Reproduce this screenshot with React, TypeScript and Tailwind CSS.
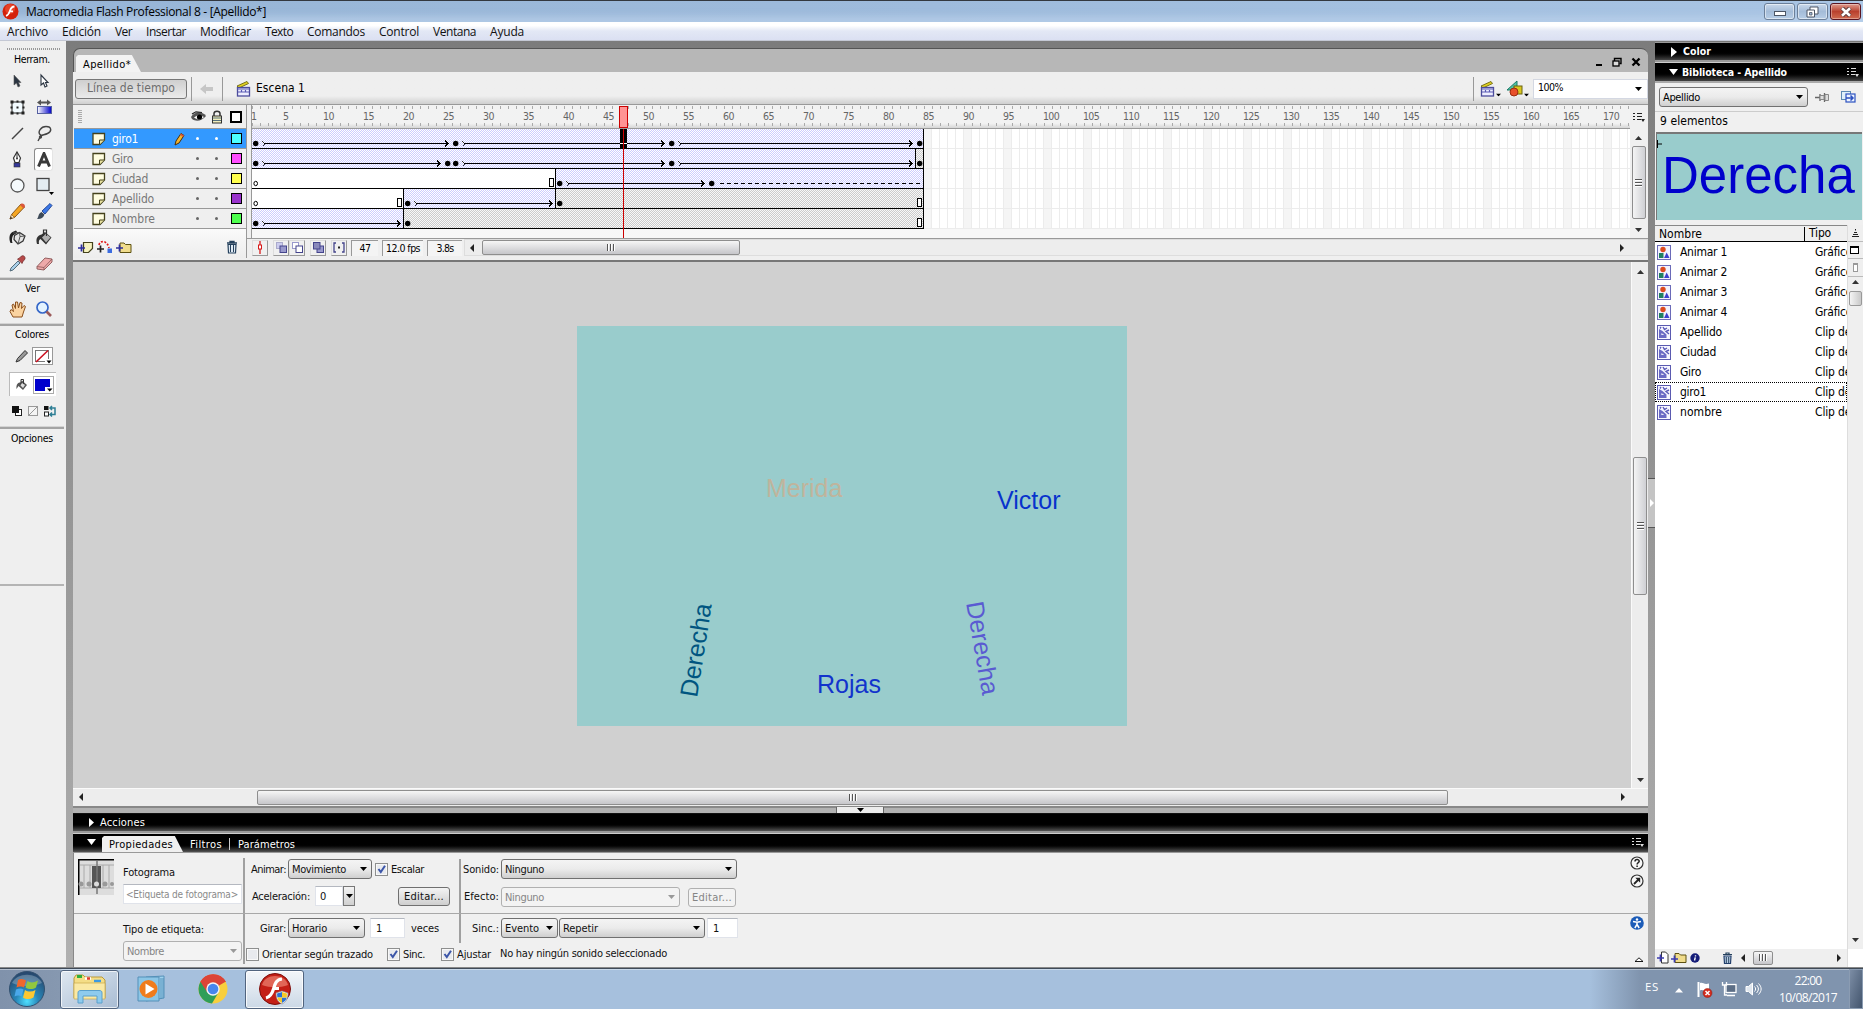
import { useLayoutEffect, useRef, type ReactNode } from "react";

/* Text run whose tracking is adjusted so that it fills a given width. */
function T({ w, className = "", children }: { w: number; className?: string; children: string }) {
  const ref = useRef<HTMLSpanElement>(null);
  useLayoutEffect(() => {
    const el = ref.current;
    if (!el) return;
    el.style.letterSpacing = "0px";
    const natural = el.getBoundingClientRect().width;
    el.style.letterSpacing = `${(w - natural) / children.length}px`;
  }, [w, children]);
  return (
    <span ref={ref} className={`inline-block shrink-0 whitespace-pre ${className}`}>
      {children}
    </span>
  );
}

function Icon({ w, h, className = "", children }: { w: number; h: number; className?: string; children: ReactNode }) {
  return (
    <svg width={w} height={h} viewBox={`0 0 ${w} ${h}`} className={`block shrink-0 ${className}`}>
      {children}
    </svg>
  );
}

const Up = ({ className = "" }) => (
  <Icon w={7} h={4} className={className}><path d="M0 4L3.5 0L7 4Z" fill="#333" /></Icon>
);
const Down = ({ className = "", color = "#000" }) => (
  <Icon w={7} h={4} className={className}><path d="M0 0H7L3.5 4Z" fill={color} /></Icon>
);
const Left = ({ className = "" }) => (
  <Icon w={4} h={8} className={className}><path d="M4 0V8L0 4Z" fill="#222" /></Icon>
);
const Right = ({ className = "" }) => (
  <Icon w={4} h={8} className={className}><path d="M0 0V8L4 4Z" fill="#222" /></Icon>
);

/* ---------- title and menu ---------- */

function TitleBar() {
  return (
    <div className="flex h-[22px] shrink-0 items-center border-t border-[#33383f] bg-linear-to-r from-[#97b5d6] via-[#9ebbdc] to-[#a9c5e4] shadow-[inset_0_-6px_6px_rgba(190,212,236,0.6)]">
      <Icon w={17} h={17} className="ml-[2px]">
        <circle cx="8.5" cy="8.5" r="8" fill="#d4220c" />
        <circle cx="8" cy="6" r="5" fill="#f0583c" opacity=".6" />
        <path d="M12.5 3.5C9 3.5 8.5 6 7.8 8.2C7 10.700 6.300 12 4 12.800M7 8.300H11" stroke="#fff" strokeWidth="1.800" fill="none" />
      </Icon>
      <T w={240} className="ml-[7px] font-['Open_Sans'] text-[12px] text-black">Macromedia Flash Professional 8 - [Apellido*]</T>
      <div className="ml-auto flex gap-[2px] pr-[2px]">
        <div className="flex h-[17px] w-[31px] items-center justify-center rounded-[3px] border border-[#6b7f99] bg-linear-to-b from-[#c9d8ea] via-[#a4bcd8] to-[#b7cde6] shadow-[inset_0_0_0_1px_rgba(255,255,255,.5)]">
          <Icon w={12} h={5} className="mt-1"><rect x=".5" y=".5" width="11" height="4" fill="#fff" stroke="#4c5564" /></Icon>
        </div>
        <div className="flex h-[17px] w-[31px] items-center justify-center rounded-[3px] border border-[#6b7f99] bg-linear-to-b from-[#c9d8ea] via-[#a4bcd8] to-[#b7cde6] shadow-[inset_0_0_0_1px_rgba(255,255,255,.5)]">
          <Icon w={13} h={12}><path d="M4 1H12V8H4Z" fill="#fff" stroke="#4c5564" /><path d="M1 4H8.500V11H1Z" fill="#fff" stroke="#4c5564" /><path d="M3.500 6.500H6V9H3.500Z" fill="#9fb7d4" stroke="#4c5564" strokeWidth=".8" /></Icon>
        </div>
        <div className="flex h-[17px] w-[31px] items-center justify-center rounded-[3px] border border-[#5a1420] bg-linear-to-b from-[#dd9a8e] via-[#b9402e] to-[#cf6a50] shadow-[inset_0_0_0_1px_rgba(255,255,255,.35)]">
          <Icon w={12} h={10}><path d="M2 1L10 9M10 1L2 9" stroke="#5b3b3b" strokeWidth="4.400" /><path d="M2 1.300L10 8.700M10 1.300L2 8.700" stroke="#fff" strokeWidth="2.600" /></Icon>
        </div>
      </div>
    </div>
  );
}

const menus: [string, number][] = [
  ["Archivo", 41], ["Edición", 39], ["Ver", 17], ["Insertar", 40], ["Modificar", 51],
  ["Texto", 28], ["Comandos", 58], ["Control", 40], ["Ventana", 43], ["Ayuda", 34],
];

function MenuBar() {
  return (
    <div className="flex h-[19px] shrink-0 items-center gap-[14px] border-b border-[#c4c8d4] bg-linear-to-b from-white from-20% via-[#e3e8f5] via-50% to-[#dbe0f2] pl-[7px] font-['Open_Sans'] text-[12px] text-[#111]">
      {menus.map(([m, w]) => <T key={m} w={w}>{m}</T>)}
    </div>
  );
}

/* ---------- tool palette ---------- */

const tools: ReactNode[] = [
  <Icon w={20} h={20}><path d="M7 4V14L9.500 12L11 16L13 15L11.500 11.500H14Z" fill="#2b3542" stroke="#555" strokeWidth=".6" /></Icon>,
  <Icon w={20} h={20}><path d="M7 4V14L9.500 12L11 16L13 15L11.500 11.500H14Z" fill="#fff" stroke="#2b3542" strokeWidth="1.100" /></Icon>,
  <Icon w={20} h={20}><rect x="5" y="5" width="11" height="11" fill="#f3fbff" stroke="#222" /><path d="M3.500 3.500h3v3h-3zM14.500 3.500h3v3h-3zM3.500 14.500h3v3h-3zM14.500 14.500h3v3h-3zM9.500 3.500h2v2h-2zM9.500 15.500h2v2h-2zM3.500 9.500h2v2h-2zM15.500 9.500h2v2h-2zM9.500 9.500h2v2h-2z" fill="#222" /></Icon>,
  <Icon w={20} h={20}><defs><linearGradient id="gt"><stop offset="0" stopColor="#fff" /><stop offset="1" stopColor="#0000c8" /></linearGradient></defs><path d="M3 5.500L7 2.500V4.500H13V2.500L17 5.500L13 8.500V6.500H7V8.500Z" fill="#555" /><rect x="3.500" y="9.500" width="14" height="7" fill="url(#gt)" stroke="#5560a0" /></Icon>,
  <Icon w={20} h={20}><path d="M5 16L16 5" stroke="#444" strokeWidth="1.400" /></Icon>,
  <Icon w={20} h={20}><path d="M6.500 12C3 9 7 3.500 12 3.500C18 3.500 18 8.500 13.500 10.500C10.500 12 6 12 5.500 14C5.500 16 8.500 15 7 12.500L4 18" stroke="#444" strokeWidth="1.400" fill="none" /></Icon>,
  <Icon w={20} h={20}><path d="M10 3L13.500 9L12 13.500H8L6.500 9Z" fill="#fff" stroke="#333" strokeWidth="1.200" /><path d="M10 3V9" stroke="#333" /><circle cx="10" cy="9.500" r="1" fill="#333" /><rect x="7" y="14" width="6" height="4" fill="#34389a" stroke="#333" strokeWidth=".6" /></Icon>,
  <div className="flex h-[23px] w-[23px] items-center justify-center rounded-[3px] border border-[#8c8c8c] border-r-[#e5e5e5] border-b-[#e5e5e5] bg-white">
    <Icon w={14} h={15}><path d="M1.500 14.500L7 1.500L12.500 14.500M3.500 10H10.500" stroke="#3a3a3a" strokeWidth="2.900" fill="none" /></Icon>
  </div>,
  <Icon w={20} h={20}><circle cx="10.500" cy="10.500" r="6.500" fill="#f5fafc" stroke="#555" strokeWidth="1.300" /></Icon>,
  <Icon w={22} h={20}><rect x="4" y="3.500" width="12" height="12" fill="#e4edf2" stroke="#444" strokeWidth="1.300" /><path d="M16 17H21L18.500 20Z" fill="#000" /></Icon>,
  <Icon w={20} h={20}><path d="M3 18L5 13L14 3L17.500 6L8 16Z" fill="#f5a623" stroke="#7a4a10" strokeWidth=".9" /><path d="M13 4L16.500 7.500L18 5.500C18 3 16 2 14.500 2.500Z" fill="#d9583c" /><path d="M3 18L4.500 13.500L7.500 16.500Z" fill="#f9e3b8" stroke="#7a4a10" strokeWidth=".6" /><path d="M3 18L3.800 15.800L5.300 17.200Z" fill="#222" /></Icon>,
  <Icon w={20} h={20}><path d="M8 10L16 2.500L18 4.500L11 13Z" fill="#3c78e6" stroke="#1c3f90" strokeWidth=".9" /><path d="M3 18C5 16 4 12.500 7.500 11L10.500 13.500C9.500 17 6 18.500 3 18Z" fill="#3d4a58" /></Icon>,
  <Icon w={20} h={20}><path d="M3.500 16C1.500 11 2.500 6.500 5.500 5L9 3.500L10.500 5.500L6 8.500C5 11 4.500 13 5.500 16Z" fill="#222" /><path d="M7.500 8.500L12.500 5.500L18 9L16 14L11 17L7 12.500Z" fill="#e4e4e4" stroke="#333" strokeWidth="1.200" /><path d="M6 6L12 5.500M12.500 5.500L13 9.500L18 9M13 9.500L11 17" stroke="#555" fill="none" /></Icon>,
  <Icon w={20} h={20}><path d="M3 17C1.500 12 3 8.500 7.500 7.500L11 5L17.500 10.500L12 17.500L6.500 12C5 12.500 4.500 14.500 5 17Z" fill="#333" /><path d="M8 10.500L12 6.500L16.500 10.500L12 15.500Z" fill="#b0b0b0" /><path d="M9.500 9V3H12.500V9" stroke="#333" fill="none" strokeWidth="1.200" /></Icon>,
  <Icon w={20} h={20}><path d="M3 18L4 15L11 8L13 10L6 17Z" fill="#a9cfe8" stroke="#47606f" strokeWidth=".9" /><path d="M10.500 6L15 10.500L16 8.500L18 6C18.500 3.500 16.500 2 14.500 3L12.500 5Z" fill="#b54848" stroke="#6b2a2a" strokeWidth=".7" /></Icon>,
  <Icon w={20} h={20}><path d="M3 13.500L11 5L18 6V9L10 17L3 16Z" fill="#eea9a9" stroke="#8a5555" strokeWidth=".9" /><path d="M3 13.500L10 14.500L18 6M10 14.500V17" fill="none" stroke="#8a5555" strokeWidth=".8" /></Icon>,
];

function ToolDivider() {
  return <div className="h-[3px] w-[64px] shrink-0 bg-[#a4a4a4] shadow-[inset_0_1px_0_#d4d4d4]" />;
}

function Toolbar() {
  return (
    <div className="flex w-[66px] shrink-0 flex-col bg-[#efefef] font-['DejaVu_Sans_Condensed','Noto_Sans',sans-serif] text-[10.500px] text-black">
      <div className="mt-[6px] ml-[7px] h-[4px] w-[53px] bg-[repeating-linear-gradient(90deg,#999_0_1px,transparent_1px_2px)] shadow-[inset_0_-1px_0_#efefef,inset_0_1px_0_#efefef]" />
      <div className="flex h-[17px] items-center pl-[14px]"><T w={36}>Herram.</T></div>
      <div className="grid w-[64px] grid-cols-[34px_28px] grid-rows-[repeat(8,26px)] items-center">
        {tools.map((t, i) => <div key={i} className={i % 2 ? "flex w-[19px] justify-center" : "flex justify-center"}>{t}</div>)}
      </div>
      <div className="h-[1px]" />
      <ToolDivider />
      <div className="flex h-[17px] items-center pl-[25px]"><T w={15}>Ver</T></div>
      <div className="flex h-[26px] items-center pb-[2px]">
        <Icon w={20} h={20} className="ml-[8px]"><path d="M5 18L2 12.500L3 10.500L5.500 12.500L4 6L5.500 5L7.500 9.500L7.500 3H9.500L10.500 9L12 3.500L14 4L13.500 9.500L16 6.500L17.500 7.500L15.500 13L14 18Z" fill="#fbd3a0" stroke="#8b4f1c" strokeWidth="1" /></Icon>
        <Icon w={20} h={20} className="ml-[6px]"><circle cx="8.500" cy="8.500" r="5.500" fill="#e3f3ff" stroke="#3466c8" strokeWidth="1.700" /><path d="M12.500 12.500L17 17" stroke="#9b5a5a" strokeWidth="2.600" /></Icon>
      </div>
      <ToolDivider />
      <div className="flex h-[17px] items-center pl-[15px]"><T w={34}>Colores</T></div>
      <div className="flex h-[25px] items-center">
        <Icon w={14} h={14} className="ml-[15px]"><path d="M1 13L2.500 9.500L10 1.500L12.500 4L5 11.500Z" fill="#999" stroke="#333" /></Icon>
        <div className="ml-[3px] flex h-[18px] w-[21px] items-center border border-[#999] bg-white">
          <Icon w={19} h={16}><rect x="2.500" y="2.500" width="13" height="11" fill="#fff" stroke="#777" /><path d="M3 14L15 2.500" stroke="#cc1020" strokeWidth="1.600" /><path d="M12 11H19V16H12Z" fill="#fff" /><path d="M13.500 12.500H18.500L16 15.500Z" fill="#000" /></Icon>
        </div>
      </div>
      <div className="mt-[4px] ml-[9px] flex h-[24px] w-[47px] items-center border-t border-l border-[#bbb] bg-white">
        <Icon w={14} h={14} className="ml-[5px]"><path d="M1.500 11C1 6 3 4.500 5.500 4.500L7 2.500L12 7L8 12L3.500 8Z" fill="#555" /><path d="M6 6V1.500H8.500V7" stroke="#333" fill="none" /><path d="M7 5L10 7L8 10L5.500 7.500Z" fill="#ddd" /></Icon>
        <div className="ml-[4px] flex h-[18px] w-[21px] items-center border border-[#aaa] bg-white">
          <Icon w={19} h={16}><rect x="1" y="2" width="15" height="12" fill="#0000cc" /><path d="M11 10H19V16H11Z" fill="#fff" /><path d="M13 11.500H18.500L15.750 14.500Z" fill="#000" /></Icon>
        </div>
      </div>
      <div className="flex h-[30px] items-center pl-[11px]">
        <Icon w={12} h={12}><rect x="4.500" y="4.500" width="6" height="6" fill="#fff" stroke="#222" /><rect x="1" y="1" width="7" height="7" fill="#111" /></Icon>
        <Icon w={12} h={12} className="ml-[4px]"><rect x="1.500" y="1.500" width="9" height="9" fill="#f4f4f4" stroke="#999" /><path d="M2 10L10 2" stroke="#999" /></Icon>
        <Icon w={14} h={12} className="ml-[4px]"><rect x="1" y="1" width="4.500" height="4" fill="#111" /><rect x="1.500" y="7" width="4" height="4" fill="#fff" stroke="#222" /><path d="M7 3H12V9.500H7M9 1L7 3L9 5M9 7.500L7 9.500L9 11.500" stroke="#2e7f95" strokeWidth="1.500" fill="none" /></Icon>
      </div>
      <ToolDivider />
      <div className="flex h-[18px] items-center pl-[11px]"><T w={42}>Opciones</T></div>
      <div className="mt-[137px] h-[2px] w-[64px] bg-[#b4b4b4]" />
    </div>
  );
}

/* ---------- document window ---------- */

const Clapper = () => (
  <Icon w={15} h={17}>
    <path d="M1 6L11 1.500L12.500 3.500L3 8Z" fill="#e0d020" stroke="#6b6410" strokeWidth=".9" />
    <rect x="1.500" y="7.500" width="12" height="8.500" fill="#eef" stroke="#4c4c9c" strokeWidth="1.300" />
    <path d="M1.500 9H13.500M2 12H13M5.500 10V12M9.500 10V12" stroke="#5a5ab4" strokeWidth="1.200" />
  </Icon>
);

function DocTabs() {
  return (
    <div className="flex h-[24px] shrink-0 items-end rounded-t-[7px] border-t border-l border-[#555] bg-[#b7b7b7]">
      <div className="ml-[2px] flex h-[17px] w-[65px] items-center bg-[#f3f3f3] pt-[1px] pl-[7px] [clip-path:polygon(0_2px,2px_0,86%_0,100%_100%,0_100%)]">
        <T w={48} className="text-[11px]">Apellido*</T>
      </div>
      <div className="mr-[7px] mb-[5px] ml-auto flex items-end gap-[9px]">
        <Icon w={8} h={10}><rect x="1" y="7" width="6" height="2" fill="#000" /></Icon>
        <Icon w={10} h={10}><path d="M2.500 4V1.500H9V6.500H7.500" stroke="#000" strokeWidth="1.400" fill="none" /><rect x="1" y="4" width="6" height="5" fill="#ddd" stroke="#000" strokeWidth="1.300" /></Icon>
        <Icon w={10} h={10}><path d="M1.500 1.500L8.500 8.500M8.500 1.500L1.500 8.500" stroke="#000" strokeWidth="2.300" /></Icon>
      </div>
    </div>
  );
}

function EditBar() {
  return (
    <div className="flex h-[33px] shrink-0 items-center border-b border-[#999] bg-linear-to-b from-[#efefef] from-75% to-[#cfcfcf] pt-[1px] pl-[2px] text-[12px]">
      <div className="flex h-[20px] w-[112px] items-center justify-center rounded-[3px] border-[1.500px] border-[#777] bg-linear-to-b from-[#cfcfcf] to-[#ebebeb] text-[#6d6d6d]"><T w={88}>Línea de tiempo</T></div>
      <div className="ml-[4px] h-[24px] w-[1px] bg-[#999]" />
      <Icon w={14} h={10} className="ml-[8px]"><path d="M0 5L6 0V3H13V7H6V10Z" fill="#c6c6c6" /></Icon>
      <div className="ml-[8px] h-[24px] w-[1px] bg-[#999]" />
      <div className="ml-[13px]"><Clapper /></div>
      <T w={49} className="ml-[5px]">Escena 1</T>
      <div className="ml-auto flex items-center">
        <div className="h-[24px] w-[1px] bg-[#999]" />
        <div className="ml-[6px] flex items-end"><Clapper /><Down className="scale-75" /></div>
        <Icon w={17} h={17} className="ml-[4px]"><path d="M1 10L11 1V10Z" fill="#4fc3a8" stroke="#1f7a66" /><rect x="8" y="6" width="8" height="8" fill="#d9c61e" stroke="#6b6410" /><circle cx="8" cy="12" r="4" fill="#e8502a" stroke="#9a2d10" /></Icon>
        <Down className="mt-[13px] scale-75" />
        <div className="ml-[3px] flex h-[20px] w-[115px] items-center border border-[#d4d8e2] bg-white pr-[5px] pb-[2px] pl-[4px]"><T w={25} className="text-[10.500px]">100%</T><Down className="mt-[2px] ml-auto" /></div>
      </div>
    </div>
  );
}

const layers: [string, number, string][] = [
  ["giro1", 26, "bg-[#4dffff]"],
  ["Giro", 21, "bg-[#ff4dff]"],
  ["Ciudad", 36, "bg-[#ffff4d]"],
  ["Apellido", 42, "bg-[#9933cc]"],
  ["Nombre", 43, "bg-[#4dff4d]"],
];

function LayerList() {
  return (
    <div className="flex w-[173px] shrink-0 flex-col border-r border-[#999]">
      <div className="flex h-[24px] shrink-0 items-center border-b border-[#999] pl-[4px]">
        <div className="h-[13px] w-[4px] bg-[repeating-linear-gradient(0deg,#aaa_0_1px,transparent_1px_2px)]" />
        <Icon w={16} h={12} className="ml-[109px]"><path d="M0 6C4 0 11 0 15 5C11 10 5 11 1 8" fill="#555" /><path d="M3 6.500C6 3.500 10 4 13 6C10 9 6 9 3 6.500" fill="#fff" /><circle cx="8.500" cy="6" r="2.600" fill="#000" /><path d="M1 3L5 .8L11 1.500" stroke="#222" strokeWidth="1.200" fill="none" /></Icon>
        <Icon w={12} h={14} className="ml-[4px]"><path d="M3 6V3.500C3 .5 9 .5 9 3.500V6" stroke="#333" strokeWidth="1.500" fill="none" /><rect x="1.500" y="6" width="9" height="7" fill="#f2eebc" stroke="#333" /><path d="M2 8H10M2 10.500H10" stroke="#56707a" strokeWidth="1.200" /></Icon>
        <div className="ml-[7px] h-[12px] w-[12px] border-2 border-black bg-white" />
      </div>
      {layers.map(([name, w, color], i) => (
        <div key={name} className={i === 0 ? "flex h-[20px] shrink-0 items-center border-b border-[#999] bg-[#3399ff] text-white" : "flex h-[20px] shrink-0 items-center border-b border-[#999] text-[#777]"}>
          <Icon w={14} h={14} className="ml-[18px]"><path d="M1 1.500H12.500V8L8 12.500H1Z" fill="#fffde0" stroke="#44421c" strokeWidth="1.300" /><path d="M7.500 12.500V8H12.500" fill="#e8e2a0" stroke="#44421c" /></Icon>
          <T w={w} className="mt-[2px] ml-[6px] text-[12px]">{name}</T>
          <div className="ml-auto flex items-center pr-[4px]">
            {i === 0 && <Icon w={11} h={14} className="mr-[11px]"><path d="M1 13L2 9L7 1.500L10 3.500L5 11Z" fill="#f2b430" stroke="#4a2e08" /><path d="M7 1.500L10 3.500L9 5L6 3Z" fill="#d9583c" /></Icon>}
            <div className={i === 0 ? "h-[3px] w-[3px] rounded-full bg-white" : "h-[3px] w-[3px] rounded-full bg-[#666]"} />
            <div className={i === 0 ? "ml-[16px] h-[3px] w-[3px] rounded-full bg-white" : "ml-[16px] h-[3px] w-[3px] rounded-full bg-[#666]"} />
            <div className={`ml-[13px] h-[11px] w-[11px] border border-black ${color}`} />
          </div>
        </div>
      ))}
      <div className="flex h-[29px] shrink-0 items-center bg-linear-to-b from-[#fafafa] to-[#ededed] pt-[7px] pl-[4px]">
        <Icon w={16} h={13}><path d="M5.500 1.500H14.500V7.500L10.500 11.500H5.500Z" fill="#f6f2c0" stroke="#44421c" strokeWidth="1.200" /><path d="M0 7H7M3.500 3.500V10.500" stroke="#2f2f9c" strokeWidth="1.700" /></Icon>
        <Icon w={16} h={14} className="ml-[3px]"><path d="M2 5C3 0 10 0 12 8" stroke="#e01818" strokeWidth="1.700" strokeDasharray="2 1.500" fill="none" /><path d="M0 9H7M3.500 5.500V12.500" stroke="#222" strokeWidth="1.700" /><rect x="10.500" y="8.500" width="4.500" height="4.500" fill="#3b6ce0" /></Icon>
        <Icon w={16} h={14} className="ml-[3px]"><path d="M4 3H8L9.500 4.500H15V12.500H4Z" fill="#f0dc8c" stroke="#5c5010" /><path d="M0 8H7M3.500 4.500V11.500" stroke="#2f2f9c" strokeWidth="1.700" /></Icon>
        <Icon w={12} h={14} className="mr-[8px] ml-auto"><path d="M1 3H11M4 3V1.500H8V3" stroke="#24405c" strokeWidth="1.300" fill="none" /><path d="M2 4.500H10L9.500 13H2.500Z" fill="#dfeaf4" stroke="#24405c" strokeWidth="1.200" /><path d="M4.500 5V12M7.500 5V12" stroke="#24405c" /></Icon>
      </div>
    </div>
  );
}

const F = 8;
const arrow = (from: number, to: number, row: number, key: string) => {
  const y = row * 20 + 14.5;
  const x1 = (from - 1) * F + 10;
  const x2 = (to - 1) * F - 4;
  return (
    <g key={key} stroke="#000" fill="none" strokeWidth="1">
      <path d={`M${x1} ${y - 2.5}L${x1 + 2.5} ${y}L${x1} ${y + 2.5}`} strokeWidth=".8" />
      <path d={`M${x1 + 2} ${y}H${x2}`} />
      <path d={`M${x2 - 3} ${y - 3}L${x2} ${y}L${x2 - 3} ${y + 3}`} />
    </g>
  );
};

const spans: [number, number, number, string][] = [
  [0, 1, 84, "url(#tw)"], [1, 1, 83, "url(#tw)"], [1, 84, 84, "url(#st)"],
  [2, 1, 38, "#fff"], [2, 39, 84, "url(#tw)"],
  [3, 1, 19, "#fff"], [3, 20, 38, "url(#tw)"], [3, 39, 84, "url(#st)"],
  [4, 1, 19, "url(#tw)"], [4, 20, 84, "url(#st)"],
];
const keys: [number, number][] = [[0, 1], [0, 26], [0, 53], [0, 84], [1, 1], [1, 25], [1, 26], [1, 53], [1, 84], [2, 39], [2, 58], [3, 20], [3, 39], [4, 1], [4, 20]];
const tweens: [number, number, number][] = [[0, 1, 26], [0, 26, 53], [0, 53, 84], [1, 1, 25], [1, 26, 53], [1, 53, 84], [2, 39, 58], [3, 20, 39], [4, 1, 20]];
const ends: [number, number][] = [[2, 38], [3, 19], [3, 84], [4, 84]];

function Frames() {
  return (
    <svg width="1378" height="109" viewBox="0 0 1378 109" className="block bg-[#f7f7f7]" shapeRendering="crispEdges">
      <defs>
        <pattern id="tw" width="2" height="2" patternUnits="userSpaceOnUse"><rect width="2" height="2" fill="#fff" /><path d="M0 0h1v1h-1zM1 1h1v1h-1z" fill="#ccccff" /></pattern>
        <pattern id="st" width="2" height="2" patternUnits="userSpaceOnUse"><rect width="2" height="2" fill="#f8f8f8" /><path d="M0 0h1v1h-1zM1 1h1v1h-1z" fill="#cccccc" /></pattern>
        <pattern id="grid" width="40" height="20" patternUnits="userSpaceOnUse">
          <rect width="40" height="20" fill="#fff" /><rect x="32" width="8" height="20" fill="#f5f5f5" />
          <path d="M7.500 0V20M15.500 0V20M23.500 0V20M31.500 0V20M39.500 0V20M0 19.500H40" stroke="#ececec" />
        </pattern>
      </defs>
      <rect width="1378" height="100" fill="url(#grid)" />
      {spans.map(([r, a, b, fill], i) => (
        <g key={i}>
          <rect x={(a - 1) * F} y={r * 20} width={(b - a + 1) * F} height="19" fill={fill} />
          <rect x={b * F - 1} y={r * 20} width="1" height="20" fill="#000" />
        </g>
      ))}
      {[0, 1, 2, 3, 4].map((r) => <rect key={r} x="0" y={r * 20 + 19} width="672" height="1" fill="#000" />)}
      {tweens.map(([r, a, b]) => arrow(a, b, r, `${r}-${a}`))}
      <path d="M468 54.500H670" stroke="#000" strokeDasharray="4 3" />
      <g shapeRendering="auto">
        {keys.map(([r, f]) => <circle key={`${r}-${f}`} cx={(f - 1) * F + 3.7} cy={r * 20 + 14.5} r="2.700" />)}
        <ellipse cx="3.700" cy="54.500" rx="1.800" ry="2.200" fill="#fff" stroke="#000" /><ellipse cx="3.700" cy="74.500" rx="1.800" ry="2.200" fill="#fff" stroke="#000" />
      </g>
      {ends.map(([r, f]) => <rect key={`${r}-${f}`} x={(f - 1) * F + 1.5} y={r * 20 + 9.5} width="4" height="8" fill="#fff" stroke="#000" />)}
      <rect x="368" y="0" width="7" height="20" /><rect x="368" y="14" width="7" height="1" fill="#fff" />
      <path d="M371.500 0V109" stroke="#cc0000" />
    </svg>
  );
}

function Ruler() {
  return (
    <div className="relative flex h-[24px] w-[1378px] flex-col justify-between overflow-hidden border-b border-[#999] bg-linear-to-b from-[#f2f2f2] from-80% to-[#d6d6d6]">
      <div className="mt-[1px] h-[3px] bg-[repeating-linear-gradient(90deg,#aaa_0_1px,transparent_1px_8px)]" />
      <div className="flex h-[10px] items-center text-[10.500px] text-[#666]">
        {Array.from({ length: 35 }, (_, i) => (i === 0 ? 1 : i * 5)).map((n) => (
          <div key={n} className={n === 1 ? "w-[32px] shrink-0" : "w-[40px] shrink-0"}>
            <T w={n < 10 ? 5 : n < 100 ? 11 : 16} className="-ml-px">{String(n)}</T>
          </div>
        ))}
      </div>
      <div className="mb-[2px] h-[3px] bg-[repeating-linear-gradient(90deg,#aaa_0_1px,transparent_1px_8px)]" />
      <div className="absolute top-[1px] left-[367px] h-[22px] w-[9px] border border-[#cc0000] bg-[#ff9494]" />
    </div>
  );
}

const PanelMenu = ({ color = "#222" }) => (
  <Icon w={12} h={10}><path d="M0 1.500H2M4 1.500H9M0 4.500H2M4 4.500H9M0 7.500H2M4 7.500H8" stroke={color} strokeWidth="1.200" /><path d="M8 7H12L10 10Z" fill={color} /></Icon>
);

function VThumb({ className = "" }) {
  return (
    <div className={`flex w-[14px] flex-col items-center justify-center gap-[1px] rounded-[2px] border border-[#8e8e8e] bg-linear-to-r from-[#f4f4f4] to-[#cfd0d4] ${className}`}>
      <div className="h-[2px] w-[7px] border-t border-[#555] bg-white" /><div className="h-[2px] w-[7px] border-t border-[#555] bg-white" /><div className="h-[2px] w-[7px] border-t border-[#555] bg-white" />
    </div>
  );
}

function HThumb({ className = "" }) {
  return (
    <div className={`flex items-center justify-center gap-[1px] rounded-[2px] border border-[#8e8e8e] bg-linear-to-b from-[#f6f6f6] to-[#c6c6ca] ${className}`}>
      <div className="h-[7px] w-[2px] border-l border-[#555] bg-white" /><div className="h-[7px] w-[2px] border-l border-[#555] bg-white" /><div className="h-[7px] w-[2px] border-l border-[#555] bg-white" />
    </div>
  );
}

function OnionBtn({ children, className = "" }: { children: ReactNode; className?: string }) {
  return <div className={`flex h-[16px] w-[16px] shrink-0 items-center justify-center border border-[#ddd] border-r-[#999] border-b-[#999] bg-[#f0f0f0] ${className}`}>{children}</div>;
}

const readout = "flex h-[16px] shrink-0 items-center justify-center border-t border-l border-[#999] bg-[#f4f4f4] text-[10.500px]";

function TimelineFooter() {
  return (
    <div className="flex h-[18px] items-center border-t border-[#999] text-black">
      <OnionBtn className="ml-[5px]"><Icon w={8} h={13}><path d="M4 0V13" stroke="#d81818" strokeWidth="1.300" /><rect x="2.500" y="4" width="3" height="4" fill="#fff" stroke="#d81818" /></Icon></OnionBtn>
      <OnionBtn className="ml-[5px]"><Icon w={11} h={11}><rect x=".5" y=".5" width="6" height="6" fill="#ccccee" stroke="#aaaacc" /><rect x="4" y="4" width="6.500" height="6.500" fill="#9999cc" stroke="#44448c" /></Icon></OnionBtn>
      <OnionBtn><Icon w={11} h={11}><rect x=".5" y=".5" width="6" height="6" fill="#fff" stroke="#9999cc" /><rect x="4" y="4" width="6.500" height="6.500" fill="#fff" stroke="#44448c" /></Icon></OnionBtn>
      <OnionBtn className="ml-[5px]"><Icon w={11} h={11}><rect x="4" y="4" width="6.500" height="6.500" fill="#9999cc" stroke="#44448c" /><rect x=".5" y=".5" width="6.500" height="6.500" fill="#8888bb" stroke="#44448c" /></Icon></OnionBtn>
      <OnionBtn className="ml-[5px]"><Icon w={12} h={11}><path d="M3 1H1V10H3M9 1H11V10H9" stroke="#44448c" strokeWidth="1.300" fill="none" /><rect x="5" y="4.500" width="2" height="2" fill="#222" /></Icon></OnionBtn>
      <div className={`${readout} ml-[4px] w-[27px]`}><T w={11}>47</T></div>
      <div className={`${readout} ml-[4px] w-[41px]`}><T w={34}>12.0 fps</T></div>
      <div className={`${readout} ml-[4px] w-[35px]`}><T w={17}>3.8s</T></div>
      <div className="ml-[2px] flex h-[17px] flex-1 items-center border border-[#ddd] bg-[#ededed] pl-[5px]">
        <Left /><HThumb className="ml-[8px] h-[15px] w-[258px]" /><Right className="mr-[23px] ml-auto" />
      </div>
    </div>
  );
}

function Timeline() {
  return (
    <div className="flex h-[157px] shrink-0 flex-col border-b-2 border-[#777] bg-[#efefef]">
      <div className="flex h-[153px] pl-[1px]">
        <LayerList />
        <div className="flex flex-1 flex-col">
          <div className="flex h-[133px]">
            <div className="ml-[4px] w-[1379px] border-l border-[#999]"><Ruler /><Frames /></div>
            <div className="flex w-[17px] flex-col items-center bg-[#f0f0f0]">
              <div className="mt-[7px]"><PanelMenu /></div>
              <Up className="mt-[14px]" /><VThumb className="mt-[6px] h-[73px]" /><Down className="mt-[9px]" color="#333" />
            </div>
          </div>
          <TimelineFooter />
        </div>
      </div>
    </div>
  );
}

function Stage() {
  return (
    <div className="flex h-[526px] shrink-0">
      <div className="flex-1 bg-[#d0d0d0] pt-[64px] pl-[504px]">
        <div className="relative h-[400px] w-[550px] bg-[#99cccc] font-['Liberation_Sans',Arial,sans-serif] text-[25px] leading-none whitespace-nowrap">
          <span className="absolute top-[150px] left-[189px] text-[#c0b49c]">Merida</span>
          <span className="absolute top-[162px] left-[420px] text-[#0833cc]">Victor</span>
          <span className="absolute top-[346px] left-[240px] text-[#1233cc]">Rojas</span>
          <span className="absolute top-[351px] left-[120px] origin-[0px_21px] rotate-[-81deg] text-[#005580]">Derecha</span>
          <span className="absolute top-[256px] left-[389px] origin-[0px_21px] rotate-[80deg] text-[#5a5ad2]">Derecha</span>
        </div>
      </div>
      <div className="flex w-[17px] flex-col items-center border-l border-[#fafafa] bg-[#ededed]">
        <Up className="mt-[8px]" /><VThumb className="mt-[183px] h-[138px]" /><Down className="mt-auto mb-[6px]" color="#333" />
      </div>
    </div>
  );
}

/* ---------- bottom panels ---------- */

const barStyle = "flex h-[20px] shrink-0 items-center border-t border-b-2 border-t-[#111] border-b-[#999] bg-linear-to-b from-black from-55% to-[#555] text-[11px] text-white";

function Combo({ w, tw, children, off = false, className = "" }: { w: string; tw: number; children: string; off?: boolean; className?: string }) {
  return (
    <div className={`flex h-[20px] shrink-0 items-center rounded-[3px] border px-[3px] ${off ? "border-[#b0b0b0] bg-[#f3f3f3] text-[#858585]" : "border-[#707070] bg-linear-to-b from-[#f4f4f4] via-[#ebebeb] to-[#cfcfcf]"} ${w} ${className}`}>
      <T w={tw}>{children}</T><Down className="mr-px ml-auto" color={off ? "#999" : "#000"} />
    </div>
  );
}

function Check({ on = true, className = "" }) {
  return (
    <div className={`flex h-[13px] w-[13px] shrink-0 items-center justify-center border border-[#8e8f8f] bg-[#e8eaee] shadow-[inset_0_0_0_1px_#f8f8f8] ${className}`}>
      {on && <Icon w={9} h={9}><path d="M1.500 4L3.800 7L8 .8" stroke="#3b55a8" strokeWidth="2" fill="none" /></Icon>}
    </div>
  );
}

const field = "flex h-[20px] shrink-0 items-center border border-t-[#b4b8c0] border-[#e0e3ea] bg-white";

function Properties() {
  return (
    <div className="flex h-[114px] shrink-0 flex-col border-l border-[#888] bg-[#f0f0f0] text-[11px] text-[#111]">
      <div className="flex h-[61px] border-b border-[#a8a8a8]">
        <div className="flex w-[169px]">
          <Icon w={36} h={36} className="mt-[6px] ml-[4px]">
            <rect width="36" height="36" fill="#ddd" /><path d="M.5 36V.5H36" stroke="#000" strokeWidth="2" fill="none" />
            <path d="M2 6H36M2 29H36M6 6V29M12 6V29M25 6V29M31 6V29" stroke="#aaa" /><rect x="14" y="7" width="9" height="22" fill="#555" /><path d="M19 2V35" stroke="#777" strokeWidth="1.500" />
            <circle cx="3" cy="25" r="2.500" fill="#999" /><circle cx="11" cy="25" r="2.500" fill="#999" /><circle cx="18.500" cy="25" r="2.500" fill="#ddd" /><circle cx="27" cy="25" r="2.500" fill="#999" /><circle cx="34" cy="25" r="2" fill="#999" />
          </Icon>
          <div className="ml-[9px] flex flex-col">
            <div className="mt-[10px] flex h-[18px] items-center"><T w={52}>Fotograma</T></div>
            <div className={`${field} mt-[3px] w-[119px] pl-[2px] text-[10px] text-[#8a8a8a]`}><T w={112}>{"<Etiqueta de fotograma>"}</T></div>
          </div>
        </div>
        <div className="mt-[5px] w-[2px] bg-[#a0a0a0]" />
        <div className="flex w-[214px] flex-col pt-[6px]">
          <div className="flex h-[20px] items-center pl-[6px]"><T w={35}>Animar:</T><Combo w="w-[84px]" tw={54} className="ml-[2px]">Movimiento</Combo><Check className="ml-[3px]" /><T w={33} className="ml-[3px]">Escalar</T></div>
          <div className="mt-[7px] flex h-[20px] items-center pl-[7px]"><T w={58}>Aceleración:</T><div className={`${field} ml-[5px] w-[28px] pl-[4px]`}><T w={6}>0</T></div>
            <div className="flex h-[20px] w-[12px] shrink-0 items-center justify-center border border-[#777] bg-linear-to-b from-[#f4f4f4] to-[#d0d0d0]"><Down /></div>
            <div className="mt-[1px] ml-[43px] flex h-[19px] w-[52px] shrink-0 items-center justify-center rounded-[3px] border border-[#707070] bg-linear-to-b from-[#f4f4f4] to-[#cfcfcf]"><T w={40}>Editar...</T></div></div>
        </div>
        <div className="mt-[6px] w-[2px] bg-[#a0a0a0]" />
        <div className="flex flex-1 flex-col pt-[6px]">
          <div className="flex h-[20px] items-center pl-[2px]"><T w={36}>Sonido:</T><Combo w="w-[236px]" tw={39} className="ml-[2px]">Ninguno</Combo></div>
          <div className="mt-[8px] flex h-[20px] items-center pl-[3px]"><T w={35} className="-mt-[1px]">Efecto:</T><Combo w="w-[179px]" tw={39} off className="ml-[2px]">Ninguno</Combo>
            <div className="ml-[8px] flex h-[19px] w-[48px] items-center justify-center rounded-[3px] border border-[#b0b0b0] bg-[#f3f3f3] text-[#858585]"><T w={40}>Editar...</T></div></div>
        </div>
        <div className="flex w-[22px] flex-col items-center pt-[3px]">
          <Icon w={14} h={14}><circle cx="7" cy="7" r="6" fill="#f8f8f8" stroke="#333" strokeWidth="1.200" /><path d="M5 5.500C5 3 9.200 3 9.200 5.300C9.200 6.800 7.100 6.600 7.100 8.500M7.100 9.500V11" stroke="#222" strokeWidth="1.500" fill="none" /></Icon>
          <Icon w={14} h={14} className="mt-[4px]"><circle cx="7" cy="7" r="6" fill="#f8f8f8" stroke="#333" strokeWidth="1.200" /><path d="M4 10L8.500 5.500" stroke="#222" strokeWidth="1.800" /><path d="M5.300 3.800H10.200V8.700Z" fill="#222" /></Icon>
        </div>
      </div>
      <div className="flex h-[52px]">
        <div className="w-[169px] pl-[49px]">
          <div className="mt-[6px] flex h-[18px] items-center"><T w={81}>Tipo de etiqueta:</T></div>
          <Combo w="w-[119px]" tw={37} off className="mt-[3px]">Nombre</Combo>
        </div>
        <div className="mb-[2px] w-[2px] bg-[#a0a0a0]" />
        <div className="flex w-[214px] flex-col pt-[4px]">
          <div className="flex h-[20px] items-center pl-[15px]"><T w={26}>Girar:</T><Combo w="w-[77px]" tw={35} className="ml-[2px]">Horario</Combo><div className={`${field} ml-[5px] w-[35px] pl-[5px]`}><T w={6}>1</T></div><T w={28} className="ml-[6px]">veces</T></div>
          <div className="mt-[6px] flex h-[20px] items-center pl-[1px]"><Check on={false} /><T w={111} className="ml-[3px]">Orientar según trazado</T><Check className="ml-[14px]" /><T w={22} className="ml-[3px]">Sinc.</T><Check className="ml-[16px]" /><T w={34} className="ml-[3px]">Ajustar</T></div>
        </div>
        <div className="mb-[23px] w-[2px] bg-[#a0a0a0]" />
        <div className="flex flex-1 flex-col pt-[4px]">
          <div className="flex h-[20px] items-center pl-[11px]"><T w={27}>Sinc.:</T><Combo w="w-[57px]" tw={34} className="ml-[2px]">Evento</Combo><Combo w="w-[146px]" tw={35} className="ml-[1px]">Repetir</Combo><div className={`${field} ml-[2px] w-[31px] pl-[5px]`}><T w={6}>1</T></div></div>
          <div className="mt-[5px] flex h-[20px] items-center pl-[39px]"><T w={167}>No hay ningún sonido seleccionado</T></div>
        </div>
        <div className="flex w-[22px] flex-col items-center pt-[2px]">
          <Icon w={14} h={14}><circle cx="7" cy="7" r="6.800" fill="#1c5cb8" /><circle cx="7" cy="3.500" r="1.200" fill="#fff" /><path d="M3 5.500L7 6.200L11 5.500M7 6V8.500L4.800 12M7 8.500L9.200 12" stroke="#fff" strokeWidth="1.500" fill="none" /></Icon>
          <Icon w={10} h={5} className="mt-[27px] ml-[3px]"><path d="M1 4.500L5 .8L9 4.500Z" fill="#fff" stroke="#000" strokeWidth=".9" /></Icon>
        </div>
      </div>
    </div>
  );
}

function BottomPanels() {
  return (
    <div className="flex flex-col bg-[#b2b2b2]">
      <div className="flex h-[7px] shrink-0 border-t-2 border-[#888]">
        <div className="-mt-[1px] ml-[763px] flex h-[6px] w-[48px] items-center justify-center border-x border-[#666] bg-[#ececec]"><Down /></div>
      </div>
      <div className={barStyle}>
        <Icon w={5} h={9} className="ml-[16px]"><path d="M0 0V9L5 4.500Z" fill="#fff" /></Icon><T w={45} className="ml-[6px]">Acciones</T>
      </div>
      <div className="flex h-[20px] shrink-0 items-end border-t border-b border-t-[#ccc] border-b-[#999] bg-linear-to-b from-black from-55% to-[#555] text-[11px] text-white">
        <Icon w={9} h={6} className="mb-[7px] ml-[14px]"><path d="M0 0H9L4.500 6Z" fill="#fff" /></Icon>
        <div className="ml-[6px] flex h-[16px] w-[81px] items-center bg-[#f0f0f0] pl-[7px] text-black [clip-path:polygon(0_2px,2px_0,90%_0,100%_100%,0_100%)]"><T w={64}>Propiedades</T></div>
        <div className="flex h-[16px] items-center"><T w={32} className="ml-[7px]">Filtros</T><div className="ml-[7px] h-[12px] w-px bg-[#ccc]" /><T w={57} className="ml-[8px]">Parámetros</T></div>
        <div className="mr-[4px] mb-[5px] ml-auto"><PanelMenu color="#ddd" /></div>
      </div>
      <Properties />
    </div>
  );
}

/* ---------- library ---------- */

const items: [string, number, "g" | "c"][] = [
  ["Animar 1", 47, "g"], ["Animar 2", 47, "g"], ["Animar 3", 47, "g"], ["Animar 4", 47, "g"],
  ["Apellido", 42, "c"], ["Ciudad", 36, "c"], ["Giro", 21, "c"], ["giro1", 26, "c"], ["nombre", 42, "c"],
];

function Library() {
  return (
    <div className="flex w-[208px] shrink-0 flex-col border-t border-[#777] bg-[#f0f0f0] text-[12px] text-black">
      <div className="flex h-[20px] shrink-0 items-center border-t border-b-2 border-t-[#999] border-b-[#999] bg-linear-to-b from-black from-50% to-[#444] font-bold text-white">
        <Icon w={6} h={10} className="ml-[16px]"><path d="M0 0V10L6 5Z" fill="#fff" /></Icon><T w={28} className="ml-[6px] text-[10.500px]">Color</T>
      </div>
      <div className="flex h-[21px] shrink-0 items-center border-t border-b-2 border-t-[#ccc] border-b-[#aaa] bg-linear-to-b from-black from-50% to-[#444] font-bold text-white">
        <Icon w={9} h={6} className="ml-[14px]"><path d="M0 0H9L4.500 6Z" fill="#fff" /></Icon><T w={105} className="ml-[4px] text-[10.500px]">Biblioteca - Apellido</T>
        <div className="mr-[4px] ml-auto"><PanelMenu color="#ddd" /></div>
      </div>
      <div className="flex h-[29px] shrink-0 items-center border-b border-[#ccc] pl-[4px]">
        <Combo w="w-[149px]" tw={37} className="text-[11px]">Apellido</Combo>
        <Icon w={15} h={11} className="ml-[7px]"><path d="M0 5.500H5M5 2V9M9.500 1V10" stroke="#666" strokeWidth="1.300" fill="none" /><path d="M5 3.500H9V7.500H5ZM10 2.500H13.500V8.500H10Z" stroke="#888" fill="#ddd" /></Icon>
        <Icon w={15} h={12} className="ml-[11px]"><rect x=".5" y=".5" width="9" height="8" fill="#dff0fa" stroke="#5c8ab4" /><rect x="5" y="3" width="9" height="8" fill="#eef4ff" stroke="#2b50c0" strokeWidth="1.200" /><path d="M5 7H12M9.500 4.500L12 7L9.500 9.500" stroke="#2b50c0" strokeWidth="1.500" fill="none" /></Icon>
      </div>
      <div className="flex h-[19px] shrink-0 items-center pl-[5px]"><T w={68}>9 elementos</T></div>
      <div className="mt-[1px] ml-[1px] flex h-[88px] w-[206px] shrink-0 items-start border-t-2 border-l border-[#777] bg-[#99cccc]">
        <Icon w={5} h={8} className="mt-[6px]"><path d="M.5 0V8M0 4H5" stroke="#000" /></Icon>
        <span className="mt-[16px] font-['Liberation_Sans',Arial,sans-serif] text-[51px] leading-none text-[#0000cc]">Derecha</span>
      </div>
      <div className="mt-[5px] flex min-h-0 flex-1">
        <div className="flex w-[192px] flex-col bg-white">
          <div className="flex h-[17px] shrink-0 items-center border-t border-b border-t-[#888] border-b-black bg-[#efefef]">
            <div className="w-[150px] border-r border-black pl-[4px] leading-[14px]"><T w={43}>Nombre</T></div><T w={22} className="ml-[4px]">Tipo</T>
          </div>
          {items.map(([n, w, k]) => (
            <div key={n} className={n === "giro1" ? "flex h-[20px] shrink-0 items-center overflow-hidden border border-dotted border-black pl-[1px]" : "flex h-[20px] shrink-0 items-center overflow-hidden pl-[2px]"}>
              {k === "g" ? (
                <Icon w={14} h={15}><rect x=".5" y=".5" width="13" height="14" fill="#f2f2ff" stroke="#6a6ab8" /><circle cx="6" cy="4.500" r="2.700" fill="#dc4a20" /><rect x="2" y="8" width="4.500" height="5" fill="#1f7f60" /><path d="M7 13L9.700 7.500L12.500 13Z" fill="#3f3fd0" /></Icon>
              ) : (
                <Icon w={14} h={15}><rect x=".5" y=".5" width="13" height="14" fill="#f6f6ff" stroke="#5a5ab0" /><path d="M2 4L5.500 6L9.500 9.500V13H2Z" fill="#6a6ac4" /><path d="M6 2L7.500 4.500L10 3M12 5L9 6.500L12 9M4 2L3 3.500" stroke="#5a5ab8" strokeWidth="1.400" fill="none" /><path d="M4 9L6.500 9.500" stroke="#fff" strokeWidth="1.200" /></Icon>
              )}
              <T w={w} className="ml-[9px]">{n}</T>
              <span className={n === "giro1" ? "ml-auto w-[31px] shrink-0 overflow-hidden whitespace-nowrap" : "ml-auto w-[32px] shrink-0 overflow-hidden whitespace-nowrap"}>{k === "g" ? <T w={37}>Gráfico</T> : <T w={80}>Clip de película</T>}</span>
            </div>
          ))}
          <div className="mt-auto flex h-[18px] shrink-0 items-center bg-[#efefef] pb-[1px] pl-[2px]">
            <Icon w={12} h={13}><path d="M4.500 1H8.500L11 3.500V12H4.500Z" fill="#fff" stroke="#333" /><path d="M0 7H7M3.500 3.500V10.500" stroke="#3c3cb0" strokeWidth="1.700" /></Icon>
            <Icon w={16} h={13} className="ml-[2px]"><path d="M4 2.500H8L9.500 4H15V11.500H4Z" fill="#f0dc8c" stroke="#5c5010" /><path d="M0 8H7M3.500 4.500V11.500" stroke="#3c3cb0" strokeWidth="1.700" /></Icon>
            <Icon w={10} h={10} className="ml-[3px]"><circle cx="5" cy="5" r="4.700" fill="#141c78" /><path d="M5.500 2.200V3.400M5.300 4.300L4.500 7.500" stroke="#fff" strokeWidth="1.400" /></Icon>
            <Icon w={11} h={12} className="ml-[22px]"><path d="M1 2.500H10M4 2V1H7V2" stroke="#24405c" strokeWidth="1.200" fill="none" /><path d="M2 4H9L8.500 11.500H2.500Z" fill="#b8cce4" stroke="#24406c" strokeWidth="1.200" /><path d="M4.300 5V11M6.700 5V11" stroke="#24405c" /></Icon>
            <Left className="ml-[8px]" /><HThumb className="ml-[8px] h-[14px] w-[20px]" /><Right className="mr-[6px] ml-auto" />
          </div>
        </div>
        <div className="flex w-[16px] flex-col items-center border-l border-[#ddd] bg-[#efefef]">
          <div className="flex h-[17px] w-full items-center justify-center border-b border-[#bbb]"><Icon w={7} h={8}><path d="M3.500 0V1.500M2 3.500H5M1 5.500H6M0 7.500H7" stroke="#222" /></Icon></div>
          <div className="flex h-[17px] w-full items-center justify-center border-b border-[#bbb]"><div className="mr-[2px] h-[8px] w-[9px] border border-t-2 border-black bg-white" /></div>
          <div className="flex h-[18px] w-full items-center justify-center border-b border-[#bbb]"><div className="h-[9px] w-[5px] border border-t-2 border-[#999] bg-white" /></div>
          <Up className="mt-[3px]" />
          <div className="mt-[7px] h-[15px] w-[13px] rounded-[2px] border border-[#999] bg-linear-to-r from-[#f4f4f4] to-[#c9c9c9]" />
          <Down className="mt-auto mb-[7px]" color="#333" />
          <div className="h-[18px] w-full bg-white" />
        </div>
      </div>
    </div>
  );
}

/* ---------- taskbar ---------- */

function Taskbar() {
  return (
    <div className="flex h-[41px] shrink-0 items-center border-t border-[#3f4a58] bg-[linear-gradient(90deg,#8092ab_0,#8698b0_60px,#a6c0dd_62px,#a6c0dd_1590px,#8094ae_1640px)] font-['Open_Sans'] shadow-[inset_0_1px_0_rgba(255,255,255,.4)]">
      <Icon w={38} h={38} className="ml-[8px]">
        <defs><radialGradient id="orb" cx=".5" cy=".85" r=".8"><stop offset="0" stopColor="#4fe0ff" /><stop offset=".4" stopColor="#2786b8" /><stop offset="1" stopColor="#27496f" /></radialGradient></defs>
        <circle cx="19" cy="19" r="17.500" fill="url(#orb)" stroke="#31506f" /><path d="M4 13C9 2 29 2 34 13C26 17 12 17 4 13" fill="#fff" opacity=".25" />
        <path d="M10 10C13 8 16 9 18 10.500L16 17.500C14 16 11 16 8.500 17.500Z" fill="#f0672c" /><path d="M19.500 11C22 13 26 13 30 10.500L28 17.500C25 19.500 20.500 19.500 17.500 17.500Z" fill="#93c83e" /><path d="M8 19.500C11 18 13.500 18 15.500 19.500L13.500 26.500C11.500 25 9 25 6.500 26.500Z" fill="#4aa8ea" /><path d="M17 20C20 22 24 22 27.500 20L25.500 27.500C22 29.500 18 29.500 15 27.500Z" fill="#fcc832" />
      </Icon>
      <div className="ml-[14px] flex h-[39px] w-[59px] items-center justify-center rounded-[3px] border border-[#51647e] bg-linear-to-br from-[#dfe8f1] to-[#a8bcd3] shadow-[inset_0_0_0_1px_rgba(255,255,255,.7)]">
        <Icon w={34} h={32}><path d="M1 5L3 2H10L12 4H29L32 7V25H1Z" fill="#f4dd86" stroke="#b99a3c" /><path d="M4 3.500H9" stroke="#2fae3b" strokeWidth="3" /><path d="M12 5.500H18" stroke="#fff" strokeWidth="2.500" /><path d="M14 5.500H17" stroke="#e03c2c" strokeWidth="2.500" /><path d="M21 8H28" stroke="#3d9ae0" strokeWidth="2.500" /><path d="M1 10H32V26H1Z" fill="#fae9a4" stroke="#c9aa4c" strokeWidth=".7" /><path d="M5 30V20C5 18 6 17.500 8 17.500H26C28 17.500 29 18 29 20V30H24V23H10V30Z" fill="#8ecbee" stroke="#5aa0cc" /></Icon>
      </div>
      <Icon w={30} h={28} className="ml-[18px]"><path d="M9 2L27 1V23L9 26Z" fill="#9ed2ee" stroke="#5490b8" /><path d="M1 2H22V26H1Z" fill="#8cc6e6" stroke="#5490b8" /><path d="M24 3V24M26 3V23" stroke="#5490b8" /><circle cx="11.500" cy="14" r="9" fill="#f07c1c" /><path d="M8.500 8.500L17.500 14L8.500 19.500Z" fill="#fff" /></Icon>
      <Icon w={30} h={30} className="ml-[31px]">
        <circle cx="15" cy="15" r="14.500" fill="#f8cf3e" /><path d="M15 15L2.440 7.750A14.500 14.500 0 0 1 27.560 7.750Z" fill="#dc4437" /><path d="M2.440 7.750A14.500 14.500 0 0 0 14 29.460L20.600 18.200L15 15Z" fill="#2f9e58" /><path d="M15 8H28A14.500 14.500 0 0 0 2.440 7.750L9 18Z" fill="#dc4437" /><circle cx="15" cy="15" r="6.700" fill="#f4f4f4" /><circle cx="15" cy="15" r="5.300" fill="#4886ee" />
      </Icon>
      <div className="ml-[17px] flex h-[39px] w-[59px] items-center justify-center rounded-[3px] border border-[#51647e] bg-linear-to-b from-[#f3f6f9] to-[#cbd8e6] shadow-[inset_0_0_0_1px_rgba(255,255,255,.8)]">
        <Icon w={34} h={34}><circle cx="17" cy="17" r="15.500" fill="#c41f16" stroke="#7c100c" /><path d="M4 13C7 1 27 1 30 13C22 16 12 16 4 13" fill="#ee8474" opacity=".7" /><path d="M24 7C18 7.500 17 12 15.500 17C14 22 12 25 8 26M15 16.500H21" stroke="#fff" strokeWidth="3.200" fill="none" /><path d="M18 21L24 19L30 21C30 27 28 30 24 32C20 30 18 27 18 21Z" fill="#fff" stroke="#888" strokeWidth=".7" /><path d="M19 21.500L24 20V25.500H19.300ZM24 25.500H28.800C28 28 27 29.500 24 31Z" fill="#2a72d4" /><path d="M24 20L29 21.500L28.800 25.500H24ZM19.300 25.500H24V31C21 29.500 20 28 19.300 25.500Z" fill="#f6c928" /></Icon>
      </div>
      <div className="ml-auto flex h-full items-center text-white">
        <T w={14} className="mr-[16px] mb-[6px] text-[11.500px]">ES</T>
        <Icon w={8} h={5} className="mt-[2px] mr-[13px]"><path d="M0 4.500L4 0L8 4.500Z" fill="#fff" /></Icon>
        <Icon w={17} h={17} className="mr-[8px]"><path d="M2.500 1V16" stroke="#fff" strokeWidth="2" /><path d="M4 2C7 1 8 4 13 2.500V9.500C9 11 7 8 4 9.500Z" fill="#fff" /><circle cx="11.500" cy="12" r="4.500" fill="#d42c1e" stroke="#8a1a10" strokeWidth=".5" /><path d="M9.500 10L13.500 14M13.500 10L9.500 14" stroke="#fff" strokeWidth="1.500" /></Icon>
        <Icon w={16} h={16} className="mr-[8px]"><rect x="5" y="3.500" width="10" height="8" fill="#5c6e86" stroke="#fff" strokeWidth="1.300" /><path d="M6 14.500H14M1.500 1V4H5.500V1M3.500 4V14H6" stroke="#fff" strokeWidth="1.300" fill="none" /></Icon>
        <Icon w={17} h={16} className="mr-[17px]"><path d="M1 5.500H3.500L7.500 2V14L3.500 10.500H1Z" fill="#dfe6ee" stroke="#fff" /><path d="M9.500 5.500C11 7 11 9 9.500 10.500M11.500 4C14 6.500 14 9.500 11.500 12M13.500 2.500C17 6 17 10 13.500 13.500" stroke="#fff" fill="none" /></Icon>
        <div className="mr-[12px] flex w-[58px] flex-col items-center pb-[1px] text-[12px] leading-[17px]"><T w={27}>22:00</T><T w={58}>10/08/2017</T></div>
        <div className="h-full w-[14px] border border-[#8b9cb2] bg-linear-to-br from-[#7c8da5] to-[#44566e]" />
      </div>
    </div>
  );
}

export default function App() {
  return (
    <div className="flex h-[1009px] w-[1863px] flex-col overflow-hidden bg-[#efefef] leading-[15px]">
      <TitleBar />
      <MenuBar />
      <div className="flex h-[927px] shrink-0 border-b border-[#888]">
        <Toolbar />
        <div className="flex min-w-0 flex-1 flex-col bg-linear-to-b from-[#7c7c7c] to-[#b0b0b0] px-[7px] pt-[7px] font-['DejaVu_Sans_Condensed','Noto_Sans',sans-serif] text-black">
          <DocTabs />
          <EditBar />
          <Timeline />
          <Stage />
          <div className="flex h-[18px] shrink-0 items-center border-t border-[#fafafa] bg-[#ededed] pb-[1px] pl-[6px]"><Left /><HThumb className="ml-[174px] h-[15px] w-[1191px]" /><Right className="mr-[23px] ml-auto" /></div>
          <BottomPanels />
        </div>
        <div className="flex shrink-0 font-['DejaVu_Sans_Condensed','Noto_Sans',sans-serif]"><Library /></div>
      </div>
      <Taskbar />
      <div className="pointer-events-none absolute top-[478px] left-[1648px] flex h-[50px] w-[7px] items-center justify-center border-y border-[#555] bg-[#c4c4c4]"><Icon w={4} h={8}><path d="M0 0V8L4 4Z" fill="#fff" /></Icon></div>
    </div>
  );
}
